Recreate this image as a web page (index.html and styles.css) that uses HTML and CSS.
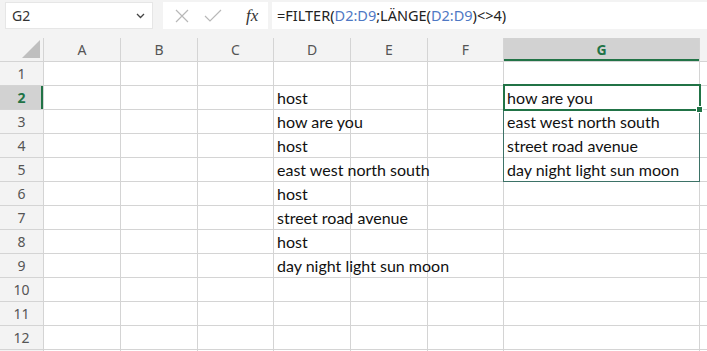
FILE: index.html
```html
<!DOCTYPE html>
<html>

<head>
	<title>FILTER</title>
	<link rel="stylesheet" href="styles.css">
</head>

<body>
	<div class="formula-bar">
		<div class="name-box">
			<span>G2</span>
			<svg class="chevron" width="9" height="6" viewBox="0 0 9 6"><path d="M1 1l3.5 3.5L8 1" fill="none" stroke="#444" stroke-width="1.3"/></svg>
		</div>
		<div class="fx-box">
			<svg width="16" height="16" viewBox="0 0 16 16"><path d="M2 2l12 12M14 2L2 14" stroke="#b8b8b8" stroke-width="1.2"/></svg>
			<svg width="18" height="16" viewBox="0 0 18 16"><path d="M1 8l5 5L17 2" fill="none" stroke="#b8b8b8" stroke-width="1.2"/></svg>
			<span class="fx"><i>fx</i></span>
		</div>
		<div class="formula">=FILTER(<span class="ref">D2:D9</span>;LÄNGE(<span class="ref">D2:D9</span>)&lt;&gt;4)</div>
	</div>

	<div class="sheet">
		<div class="corner"><svg width="18" height="18" viewBox="0 0 18 18"><path d="M18 0V18H0Z" fill="#bfbfbf"/></svg></div>
		<div class="col">A</div><div class="col">B</div><div class="col">C</div><div class="col">D</div>
		<div class="col">E</div><div class="col">F</div><div class="col active">G</div><div class="col"></div>

		<div class="row">1</div><div></div><div></div><div></div><div></div><div></div><div></div><div></div><div></div>
		<div class="row active">2</div><div></div><div></div><div></div><div class="t">host</div><div></div><div></div>
		<div class="selected">how are you<span class="spill"></span><span class="handle"></span></div><div></div>
		<div class="row">3</div><div></div><div></div><div></div><div class="t">how are you</div><div></div><div></div><div>east west north south</div><div></div>
		<div class="row">4</div><div></div><div></div><div></div><div class="t">host</div><div></div><div></div><div>street road avenue</div><div></div>
		<div class="row">5</div><div></div><div></div><div></div><div class="t">east west north south</div><div></div><div></div><div>day night light sun moon</div><div></div>
		<div class="row">6</div><div></div><div></div><div></div><div class="t">host</div><div></div><div></div><div></div><div></div>
		<div class="row">7</div><div></div><div></div><div></div><div class="t">street road avenue</div><div></div><div></div><div></div><div></div>
		<div class="row">8</div><div></div><div></div><div></div><div class="t">host</div><div></div><div></div><div></div><div></div>
		<div class="row">9</div><div></div><div></div><div></div><div class="t">day night light sun moon</div><div></div><div></div><div></div><div></div>
		<div class="row">10</div><div></div><div></div><div></div><div></div><div></div><div></div><div></div><div></div>
		<div class="row">11</div><div></div><div></div><div></div><div></div><div></div><div></div><div></div><div></div>
		<div class="row">12</div><div></div><div></div><div></div><div></div><div></div><div></div><div></div><div></div>
		<div class="row"></div><div></div><div></div><div></div><div></div><div></div><div></div><div></div><div></div>
	</div>
</body>

</html>
```

FILE: styles.css
```css
body {
    margin: 0;
    width: 707px;
    height: 351px;
    overflow: hidden;
    background: #fff;
    font-family: "Lato", "Liberation Sans", sans-serif;
}
.formula-bar {
    display: flex;
    height: 38px;
    background: #f3f3f3;
    box-sizing: border-box;
    padding: 2px 0 0 5px;
    font-family: "Noto Sans", sans-serif;
}
.name-box {
    width: 148px;
    height: 27px;
    box-sizing: border-box;
    background: #fff;
    border: 1px solid #e6e6e6;
    display: flex;
    align-items: center;
    justify-content: space-between;
    padding: 0 7px 0 6px;
    font-size: 14px;
    color: #333;
}
.fx-box {
    margin-left: 10px;
    width: 105px;
    height: 27px;
    box-sizing: border-box;
    background: #fff;
    display: flex;
    align-items: center;
    gap: 14px;
    padding-left: 11px;
}
.fx {
    font-family: "Liberation Serif", serif;
    font-size: 17px;
    color: #333;
    margin-left: 10px;
}
.formula {
    margin-left: 4px;
    flex: 1;
    height: 27px;
    box-sizing: border-box;
    background: #fff;
    padding: 3px 0 0 5px;
    font-size: 14.5px;
    color: #222;
    white-space: nowrap;
}
.ref {
    color: #4f78c4;
}
.sheet {
    display: grid;
    grid-template-columns: 43px 76px 76px 75px 76px 76px 75px 195px 1fr;
    grid-auto-rows: 23px;
    gap: 1px;
    background: #d4d4d4;
    font-size: 16px;
    color: #111;
}
.sheet > div {
    background: #fff;
    padding: 1px 0 0 3px;
    white-space: nowrap;
    line-height: 21px;
}
.sheet > .t {
    position: relative;
    z-index: 1;
}
.sheet > .corner,
.sheet > .col,
.sheet > .row {
    background: #f3f3f3;
    font-family: "Noto Sans", sans-serif;
    font-size: 14px;
    color: #555;
    text-align: center;
    padding: 0;
    line-height: 24px;
}
.sheet > .corner {
    display: flex;
    align-items: flex-end;
    justify-content: flex-end;
    padding: 0 3px 3px 0;
}
.sheet > .col.active {
    background: #d2d2d2;
    color: #217346;
    font-weight: bold;
    box-shadow: inset 0 -2px 0 #217346;
}
.sheet > .row.active {
    background: #d2d2d2;
    color: #217346;
    font-weight: bold;
    box-shadow: inset -2px 0 0 #217346;
}
.sheet > .selected {
    position: relative;
}
.selected::after {
    content: "";
    position: absolute;
    left: -1px;
    top: -2px;
    right: -2px;
    bottom: -2px;
    border: 2px solid #217346;
}
.spill {
    position: absolute;
    left: -1px;
    top: -1px;
    width: 195px;
    height: 95px;
    border: 1px solid #3d7267;
}
.handle {
    position: absolute;
    right: -4px;
    bottom: -4px;
    width: 5px;
    height: 5px;
    background: #217346;
    border: 1px solid #fff;
    z-index: 2;
}
```
